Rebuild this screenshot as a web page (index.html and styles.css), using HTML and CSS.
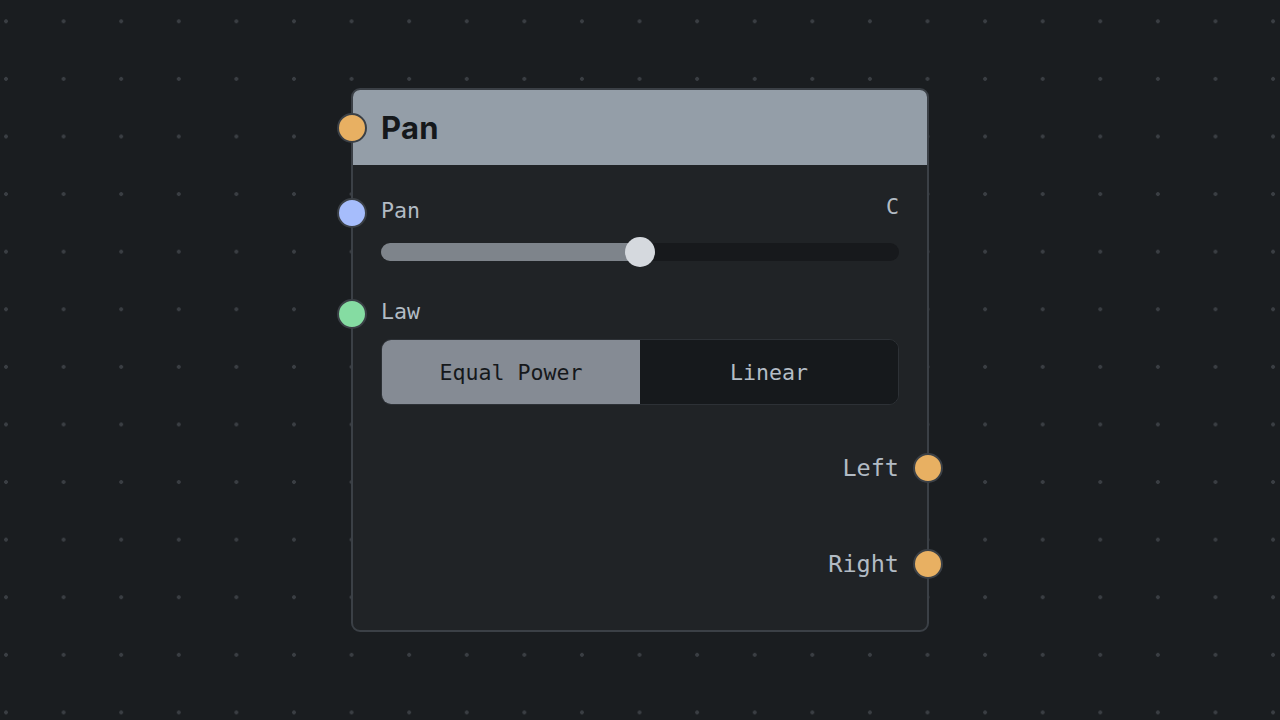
FILE: index.html
```html
<!DOCTYPE html>
<html lang="en">
<head>
<meta charset="utf-8">
<title>Pan node</title>
<link rel="stylesheet" href="styles.css">
</head>
<body>
<div class="canvas">
  <div class="node">
    <div class="node-header">
      <span class="port port-orange port-left"></span>
      <span class="node-title">Pan</span>
    </div>
    <div class="node-body">
      <div class="param">
        <div class="param-row">
          <span class="port port-blue port-left"></span>
          <span class="param-label">Pan</span>
          <span class="param-value">C</span>
        </div>
        <div class="slider">
          <div class="slider-fill" style="width: 50%"></div>
          <div class="slider-thumb" style="left: 50%"></div>
        </div>
      </div>
      <div class="param param-law">
        <div class="param-row">
          <span class="port port-green port-left"></span>
          <span class="param-label">Law</span>
        </div>
        <div class="segmented">
          <button class="segment active">Equal Power</button>
          <button class="segment">Linear</button>
        </div>
      </div>
      <div class="outputs">
        <div class="output">
          <span class="param-label out-label">Left</span>
          <span class="port port-orange port-right"></span>
        </div>
        <div class="output">
          <span class="param-label out-label">Right</span>
          <span class="port port-orange port-right"></span>
        </div>
      </div>
    </div>
  </div>
</div>
</body>
</html>
```
FILE: styles.css
```css
html, body {
  margin: 0;
  padding: 0;
  height: 100%;
}

body {
  background-color: #1a1d20;
  background-image: radial-gradient(circle, #3a3e43 1.6px, transparent 2.2px);
  background-size: 57.6px 57.6px;
  background-position: -22.8px -7.5px;
  font-family: "DejaVu Sans Mono", "Liberation Mono", monospace;
  overflow: hidden;
}

.canvas {
  padding: 88px 0 0 351px;
}

.node {
  width: 578px;
  height: 544px;
  box-sizing: border-box;
  background: #202326;
  border: 2px solid #3b4046;
  border-radius: 9px;
  display: flex;
  flex-direction: column;
}

.node-header {
  position: relative;
  height: 75px;
  background: #949ea8;
  border-radius: 7px 7px 0 0;
  display: flex;
  align-items: center;
  padding-left: 28px;
  flex-shrink: 0;
}

.node-title {
  font-family: Inter, "Noto Sans", sans-serif;
  font-weight: 700;
  font-size: 31px;
  color: #15181b;
  letter-spacing: 0.3px;
}

.node-body {
  flex: 1;
  display: flex;
  flex-direction: column;
  padding: 0 28px;
}

.port {
  position: absolute;
  width: 26px;
  height: 26px;
  border-radius: 50%;
  border: 2px solid #3b4046;
  top: 50%;
  transform: translateY(-50%);
}

.port-left { left: -44px; }
.node-header .port-left { left: -16px; }
.port-right { right: -44px; }

.param-row .port-left {
  transform: translateY(calc(-50% + 3px));
}

.port-orange { background: #e8b062; }
.port-blue { background: #a6bdfc; }
.port-green { background: #85dca2; }

.param-row {
  position: relative;
  display: flex;
  justify-content: space-between;
  align-items: center;
  height: 30px;
}

.param {
  padding-top: 30px;
}

.param-label {
  font-size: 21.6px;
  color: #b2bbc4;
}

.param-value {
  font-size: 21.6px;
  color: #b2bbc4;
  margin-top: -8px;
}

.slider {
  position: relative;
  margin-top: 18px;
  height: 18px;
  border-radius: 9px;
  background: #17191c;
}

.slider-fill {
  height: 100%;
  border-radius: 9px 0 0 9px;
  background: #7e848b;
}

.slider-thumb {
  position: absolute;
  top: 50%;
  width: 30px;
  height: 30px;
  border-radius: 50%;
  background: #d5d9de;
  transform: translate(-50%, -50%);
}

.param-law {
  padding-top: 35px;
}

.segmented {
  margin-top: 13px;
  display: flex;
  height: 66px;
  box-sizing: border-box;
  border: 1px solid #2d3136;
  border-radius: 10px;
  overflow: hidden;
  background: #16191c;
}

.segment {
  flex: 1;
  border: 0;
  margin: 0;
  font-family: "DejaVu Sans Mono", "Liberation Mono", monospace;
  font-size: 21.6px;
  background: #16191c;
  color: #b4bdc6;
}

.segment.active {
  background: #858b94;
  color: #15181b;
}

.outputs {
  display: flex;
  flex-direction: column;
  align-items: flex-end;
  padding-top: 48px;
  gap: 66px;
}

.output {
  position: relative;
  display: flex;
  align-items: center;
  height: 30px;
}

.out-label {
  font-size: 23.5px;
}

.output .port-right {
  right: -44px;
}
```
